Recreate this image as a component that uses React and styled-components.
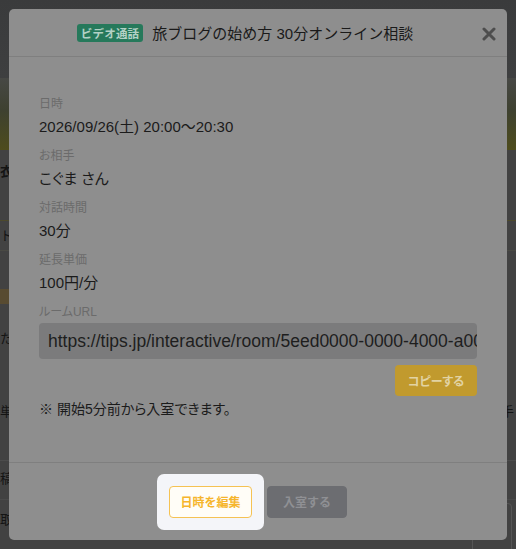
import React from "react";
import styled, { createGlobalStyle } from "styled-components";

const GlobalStyle = createGlobalStyle`
  html, body { margin: 0; padding: 0; background: #2e2e2e; }
  body {
    font-family: "Liberation Sans", "Noto Sans CJK JP", sans-serif;
    -webkit-font-smoothing: antialiased;
  }
  * { box-sizing: border-box; }
`;

const Screen = styled.div`
  position: relative;
  width: 516px;
  height: 549px;
  overflow: hidden;
  background: #2e2e2e;
`;

/* ---------- dimmed page behind the modal ---------- */
const BackPage = styled.div`
  display: flex;
  flex-direction: column;
  width: 100%;
  height: 100%;
  background: #424242;
`;

const TopBar = styled.div`
  height: 78px;
  background: linear-gradient(180deg, #3a3b3c 0%, #3e3f40 100%);
`;

const Hero = styled.div`
  height: 72px;
  background: linear-gradient(180deg, #474845 0%, #3e4130 45%, #4e4c1c 100%);
`;

const BackRow = styled.div`
  display: flex;
  justify-content: space-between;
  align-items: flex-start;
  height: ${(p) => p.$h}px;
  padding: ${(p) => p.$pt || 0}px 2px 0 0;
  border-bottom: 1px solid ${(p) => p.$line || "transparent"};
  font-size: 13px;
  line-height: 18px;
  font-weight: ${(p) => (p.$bold ? 700 : 400)};
  color: #141414;
  white-space: nowrap;
`;

const BackText = styled.span``;

const Chip = styled.span`
  display: inline-block;
  width: 24px;
  height: 15px;
  background: #584b31;
`;

const BackCard = styled.div`
  margin: -8px 2px 0 auto;
  width: 40px;
  height: 66px;
  border: 1px solid #555;
  border-radius: 4px;
`;

/* ---------- modal ---------- */
const Layer = styled.div`
  position: absolute;
  inset: 0;
  padding: 9px;
  display: flex;
  justify-content: center;
  align-items: flex-start;
`;

const Modal = styled.div`
  display: flex;
  flex-direction: column;
  width: 498px;
  height: 531px;
  background: #8e8e8e;
  border-radius: 5px;
`;

const Header = styled.div`
  position: relative;
  display: flex;
  align-items: center;
  justify-content: center;
  gap: 9px;
  height: 48px;
  padding: 0 40px 0 14px;
  border-bottom: 1px solid #7f7f7f;
`;

const Badge = styled.span`
  display: inline-flex;
  align-items: center;
  height: 18px;
  padding: 0 4px;
  background: #26795b;
  color: #b3d1c5;
  font-size: 11.5px;
  font-weight: 700;
  border-radius: 3px;
  letter-spacing: 0.2px;
`;

const Title = styled.h2`
  margin: 0;
  font-size: 15px;
  font-weight: 400;
  color: #1a1a1a;
`;

const Close = styled.button`
  position: absolute;
  right: 11px;
  top: 18px;
  width: 14px;
  height: 14px;
  padding: 0;
  border: 0;
  background: none;
  cursor: pointer;
  display: flex;
`;

const Body = styled.div`
  flex: 1;
  display: flex;
  flex-direction: column;
  padding: 38px 30px 0 30px;
  border-bottom: 1px solid #7f7f7f;
  font-feature-settings: "palt";
`;

const Field = styled.div`
  display: flex;
  flex-direction: column;
  margin-bottom: ${(p) => (p.$last ? 0 : 9)}px;
`;

const Label = styled.div`
  font-size: 12px;
  line-height: 18px;
  color: #6b6b6b;
  margin-bottom: ${(p) => p.$mb ?? 3}px;
`;

const Value = styled.div`
  font-size: 15px;
  line-height: 22px;
  color: #1b1b1b;
`;

const UrlInput = styled.input`
  height: 36px;
  width: 100%;
  padding: 0 0 0 9px;
  margin: 0;
  border: 0;
  outline: none;
  background: #7b7b7c;
  border-radius: 4px;
  font-family: inherit;
  font-size: 17.5px;
  color: #1e1e1e;
`;

const CopyRow = styled.div`
  display: flex;
  justify-content: flex-end;
  margin-top: 6px;
`;

const CopyButton = styled.button`
  width: 82px;
  height: 31px;
  border: 0;
  border-radius: 4px;
  background: #c19a2e;
  color: #e2d3a3;
  font-family: inherit;
  font-size: 12px;
  font-weight: 700;
  font-feature-settings: "palt";
`;

const Note = styled.p`
  margin: 3px 0 0;
  font-size: 14px;
  line-height: 20px;
  color: #1b1b1b;
`;

const Footer = styled.div`
  height: 77px;
  display: flex;
  align-items: center;
  justify-content: center;
  gap: 15px;
`;

const Spotlight = styled.div`
  margin: -12px;
  padding: 12px;
  background: #f4f5f9;
  border-radius: 7px;
  display: flex;
`;

const FooterButton = styled.button`
  height: 32px;
  width: ${(p) => p.$w}px;
  border-radius: 4px;
  font-family: inherit;
  font-size: 12px;
  font-weight: 700;
  cursor: pointer;
  border: 1px solid ${(p) => (p.$primary ? "#f5c253" : "#6c6d71")};
  background: ${(p) => (p.$primary ? "#fffdf7" : "#6c6d71")};
  color: ${(p) => (p.$primary ? "#f6b52c" : "#8f9094")};
`;

const fields = [
  { label: "日時", value: "2026/09/26(土) 20:00〜20:30" },
  { label: "お相手", value: "こぐま さん" },
  { label: "対話時間", value: "30分" },
  { label: "延長単価", value: "100円/分" },
];

export default function App() {
  return (
    <>
      <GlobalStyle />
      <Screen>
        <BackPage>
          <TopBar />
          <Hero />
          <BackRow $h={72} $pt={13} $bold $line="#4d4a2c">
            <BackText>衣</BackText>
          </BackRow>
          <BackRow $h={30} $pt={6} $line="#4a4a44">
            <BackText>ト</BackText>
          </BackRow>
          <BackRow $h={68} $pt={38}>
            <Chip />
          </BackRow>
          <BackRow $h={40} $pt={11}>
            <BackText>た</BackText>
          </BackRow>
          <BackRow $h={102} $pt={44} $line="#4c4c4c">
            <BackText>単</BackText>
            <BackText>手</BackText>
          </BackRow>
          <BackRow $h={39} $pt={9} $line="#4a4a4a">
            <BackText>稿</BackText>
          </BackRow>
          <BackRow $h={49} $pt={11}>
            <BackText>取引</BackText>
            <BackCard />
          </BackRow>
        </BackPage>

        <Layer>
          <Modal role="dialog">
            <Header>
              <Badge>ビデオ通話</Badge>
              <Title>旅ブログの始め方 30分オンライン相談</Title>
              <Close aria-label="閉じる">
                <svg width="14" height="14" viewBox="0 0 14 14">
                  <path
                    d="M2 2 L12 12 M12 2 L2 12"
                    stroke="#4d4d4d"
                    strokeWidth="3"
                    strokeLinecap="round"
                  />
                </svg>
              </Close>
            </Header>

            <Body>
              {fields.map((f) => (
                <Field key={f.label}>
                  <Label>{f.label}</Label>
                  <Value>{f.value}</Value>
                </Field>
              ))}
              <Field $last>
                <Label $mb={2}>ルームURL</Label>
                <UrlInput
                  readOnly
                  value="https://tips.jp/interactive/room/5eed0000-0000-4000-a000-000000000000"
                />
                <CopyRow>
                  <CopyButton>コピーする</CopyButton>
                </CopyRow>
              </Field>
              <Note>※ 開始5分前から入室できます。</Note>
            </Body>

            <Footer>
              <Spotlight>
                <FooterButton $primary $w={83}>
                  日時を編集
                </FooterButton>
              </Spotlight>
              <FooterButton $w={80}>入室する</FooterButton>
            </Footer>
          </Modal>
        </Layer>
      </Screen>
    </>
  );
}
